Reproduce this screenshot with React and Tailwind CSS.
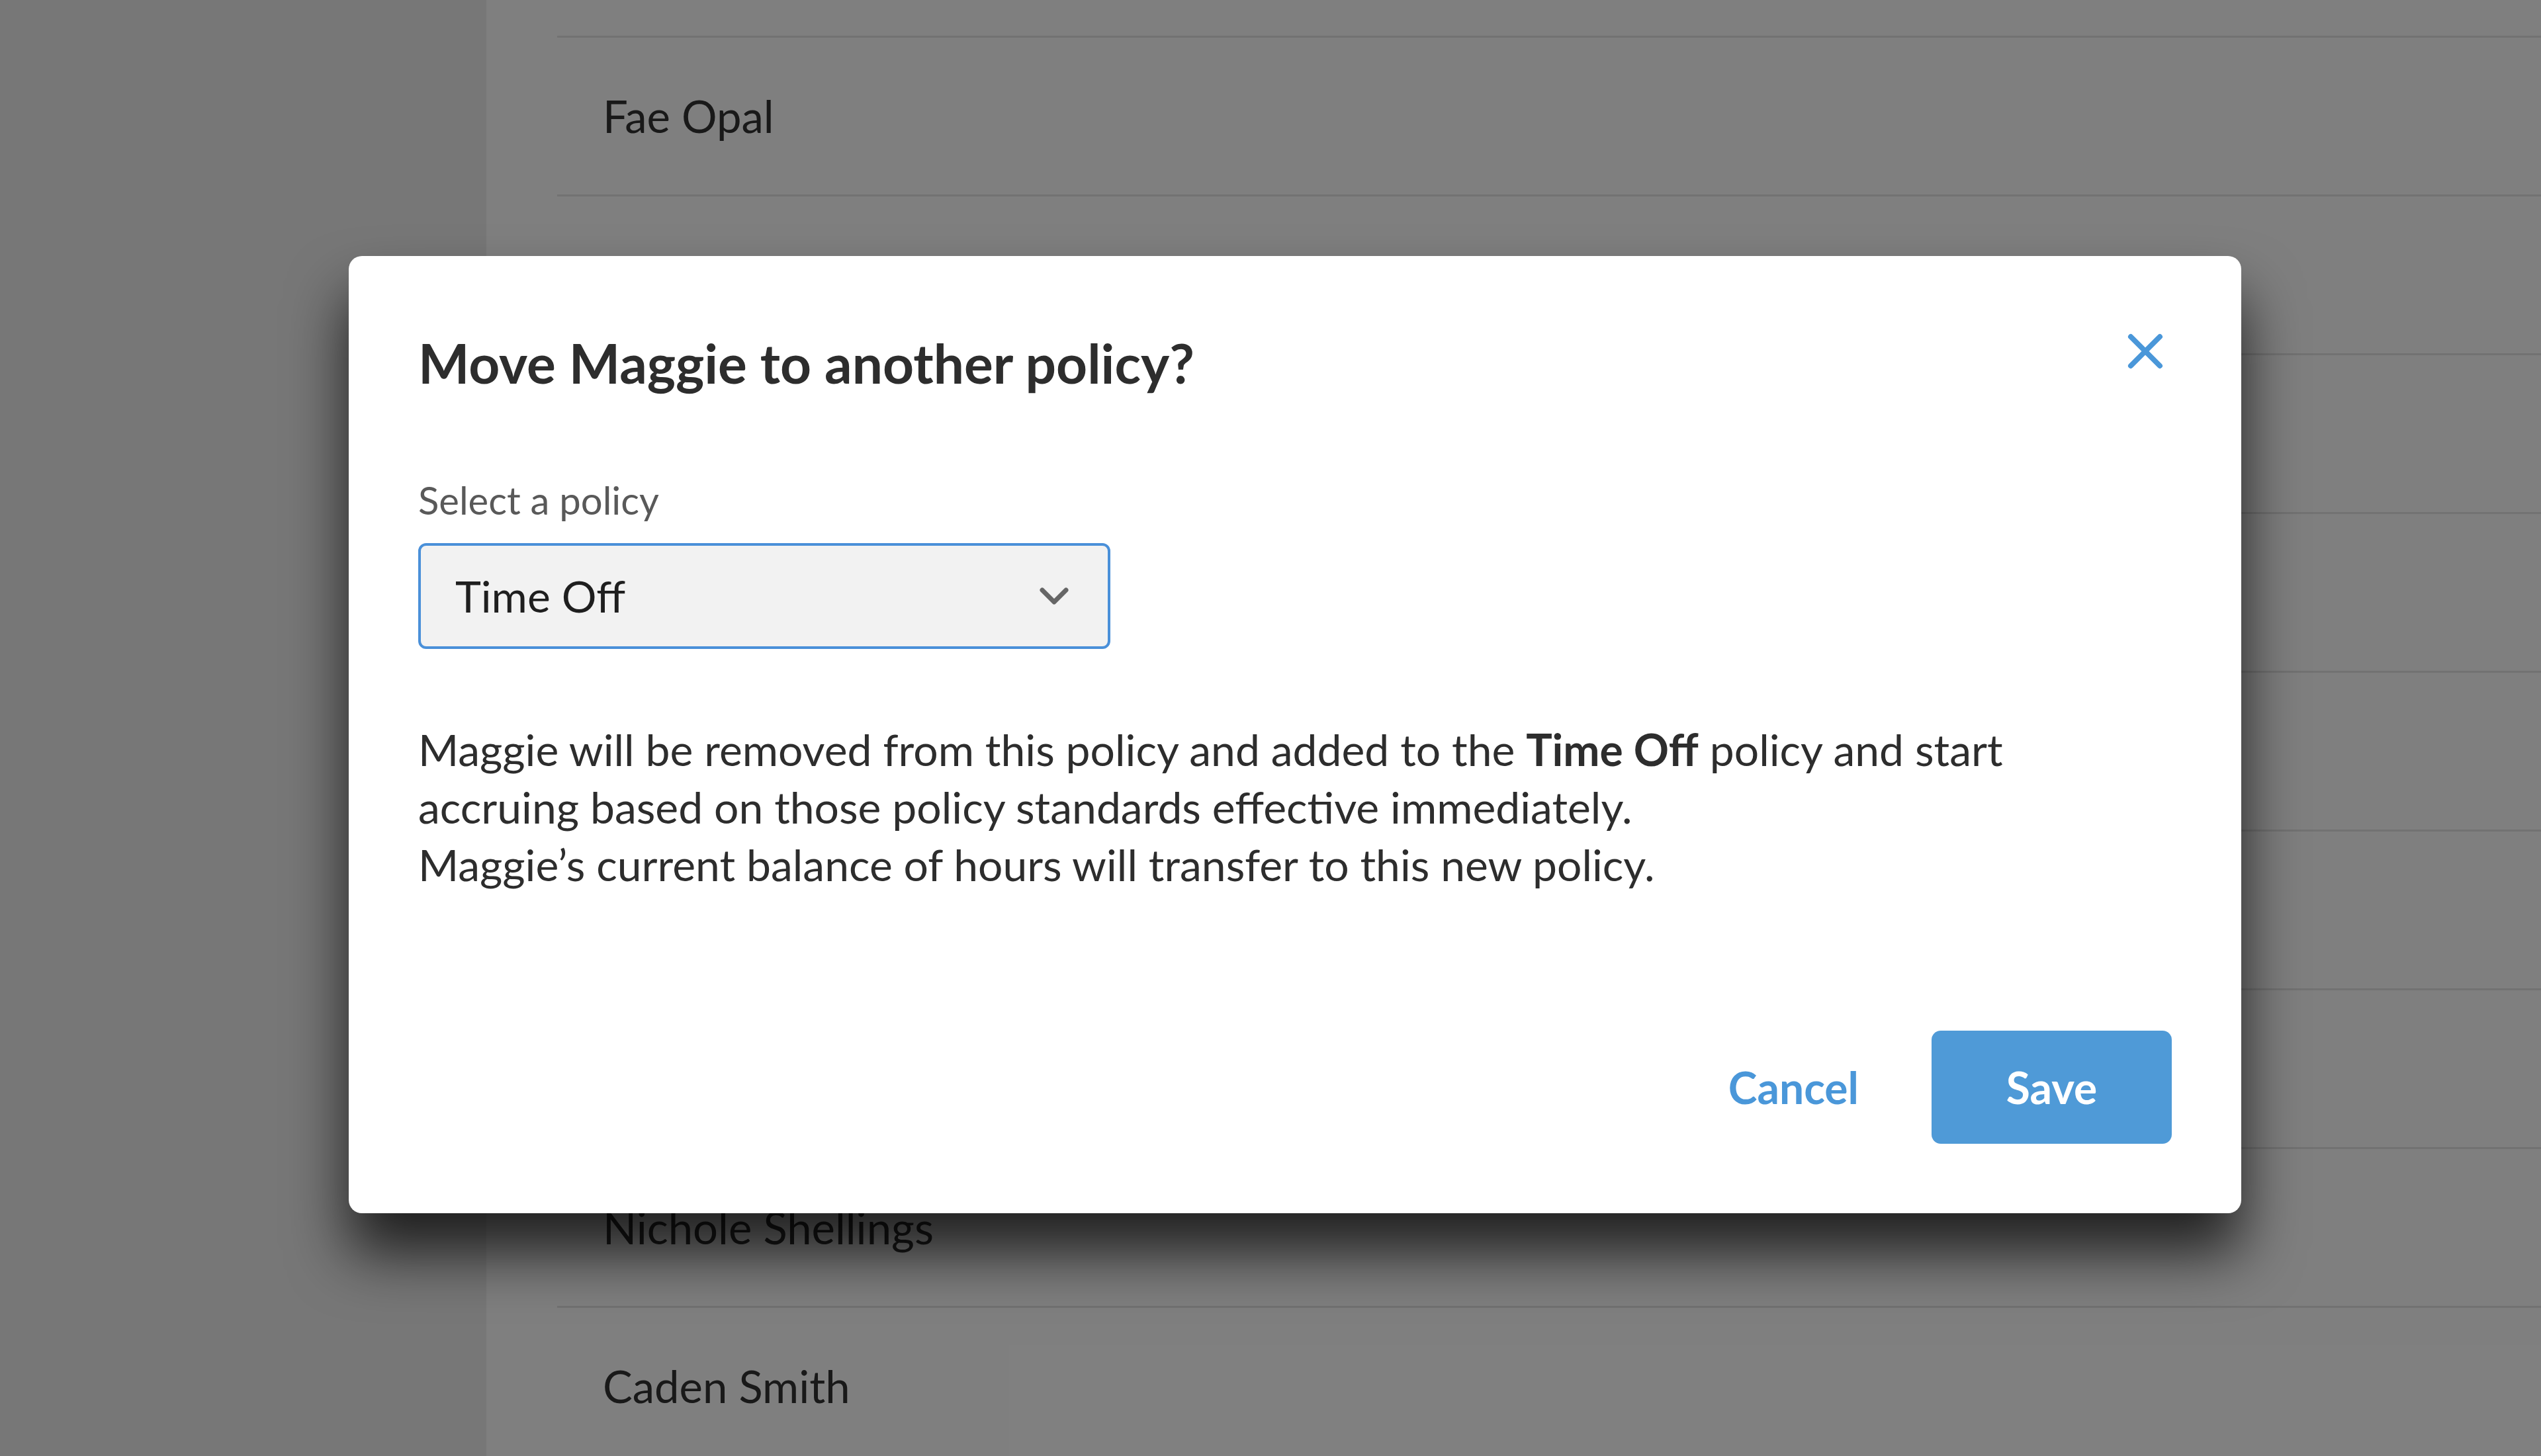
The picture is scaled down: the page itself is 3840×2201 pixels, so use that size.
import { useState } from "react";

// rows under the modal are left blank; only the visible names are listed
const people = ["", "Fae Opal", "", "", "", "", "", "", "Nichole Shellings", "Caden Smith"];

const CloseIcon = () => (
  <svg viewBox="0 0 56 56" className="w-[56px] h-[56px]" fill="none">
    <path d="M6 6 L50 50 M50 6 L6 50" stroke="#4a97d9" strokeWidth="8" strokeLinecap="round" />
  </svg>
);

const Chevron = () => (
  <svg viewBox="0 0 46 30" className="w-[46px] h-[30px]" fill="none">
    <path d="M5 6 L23 24 L41 6" stroke="#666666" strokeWidth="7" strokeLinecap="round" strokeLinejoin="round" />
  </svg>
);

const PolicyModal = () => {
  const [policy] = useState("Time Off");

  return (
    <div className="absolute left-[527px] top-[387px] w-[2860px] h-[1447px] bg-white rounded-[20px] shadow-[0_60px_90px_rgba(0,0,0,0.75)] px-[105px] pt-[112px] pb-[105px] flex flex-col">
      <div className="flex items-start justify-between">
        <h2 className="text-[82px] leading-[1.2] font-bold text-[#2d2d2d]">
          Move Maggie to another policy?
        </h2>
        <button className="mt-[4px] mr-[12px]">
          <CloseIcon />
        </button>
      </div>

      <label className="mt-[124px] text-[58px] leading-[1.2] text-[#595959]">Select a policy</label>
      <div className="mt-[30px] w-[1046px] h-[160px] rounded-[12px] border-[4px] border-[#4a90d9] bg-[#f2f2f2] flex items-center justify-between pl-[52px] pr-[58px]">
        <span className="text-[66px] text-[#1f1f1f]">{policy}</span>
        <Chevron />
      </div>

      <div className="mt-[108px] text-[66px] leading-[87px] text-[#2d2d2d]">
        <p>
          Maggie will be removed from this policy and added to the <span className="font-bold">Time Off</span> policy and start
          <br />
          accruing based on those policy standards effective immediately.
        </p>
        <p>Maggie’s current balance of hours will transfer to this new policy.</p>
      </div>

      <div className="mt-auto flex items-center justify-end gap-[110px]">
        <button className="text-[66px] font-bold text-[#4a97d9]">Cancel</button>
        <button className="w-[363px] h-[171px] rounded-[14px] bg-[#4f9ad7] text-[66px] font-bold text-white">
          Save
        </button>
      </div>
    </div>
  );
};

export default function App() {
  return (
    <div className="relative w-[3840px] h-[2201px] overflow-hidden bg-white font-['Lato','Open_Sans',sans-serif]">
      <div className="flex h-full">
        <aside className="w-[735px] h-full bg-[#eeeeee]" />
        <main className="flex-1 pl-[107px]">
          {people.map((name, i) => (
            <div
              key={i}
              className={
                i === 0
                  ? "h-[54px]"
                  : "h-[240px] border-t-[3px] border-[#e4e4e4] flex items-center pl-[69px] text-[67px] text-[#333333]"
              }
            >
              {name}
            </div>
          ))}
        </main>
      </div>

      {/* dim backdrop */}
      <div className="absolute inset-0 bg-black/50" />

      <PolicyModal />
    </div>
  );
}
